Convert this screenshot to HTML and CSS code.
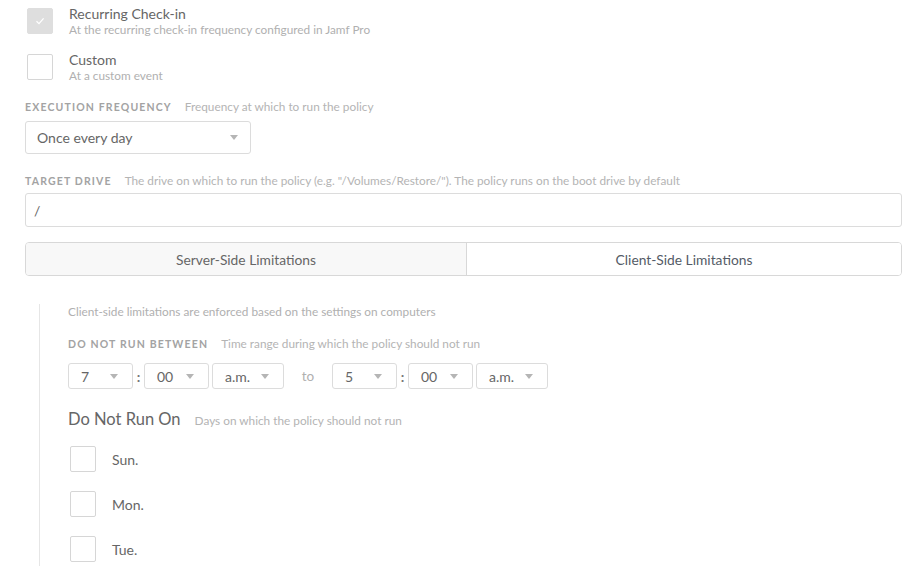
FILE: index.html
```html
<!DOCTYPE html>
<html>
<head>
<meta charset="utf-8">
<link rel="stylesheet" href="styles.css">
</head>
<body>
<div class="page">
  <div class="option">
    <span class="box checked"><svg width="12" height="12" viewBox="0 0 12 12"><path d="M2.5 6.2 L5 8.6 L9.6 3.4" fill="none" stroke="#fff" stroke-width="1.3"/></svg></span>
    <div class="option-text">
      <div class="option-title">Recurring Check-in</div>
      <div class="option-sub">At the recurring check-in frequency configured in Jamf Pro</div>
    </div>
  </div>
  <div class="option option-2">
    <span class="box"></span>
    <div class="option-text">
      <div class="option-title">Custom</div>
      <div class="option-sub">At a custom event</div>
    </div>
  </div>

  <div class="field-label label-freq"><span class="caps">EXECUTION FREQUENCY</span><span class="help">Frequency at which to run the policy</span></div>
  <div class="select select-freq"><span>Once every day</span><span class="caret"></span></div>

  <div class="field-label label-drive"><span class="caps">TARGET DRIVE</span><span class="help">The drive on which to run the policy (e.g. "/Volumes/Restore/"). The policy runs on the boot drive by default</span></div>
  <div class="input">/</div>

  <div class="tabs">
    <div class="tab tab-off">Server-Side Limitations</div>
    <div class="tab tab-on">Client-Side Limitations</div>
  </div>

  <div class="panel">
    <div class="panel-intro">Client-side limitations are enforced based on the settings on computers</div>
    <div class="field-label label-between"><span class="caps">DO NOT RUN BETWEEN</span><span class="help">Time range during which the policy should not run</span></div>
    <div class="time-row">
      <div class="select sm w64"><span>7</span><span class="caret"></span></div>
      <span class="colon">:</span>
      <div class="select sm w64"><span>00</span><span class="caret"></span></div>
      <div class="select sm w72 ml3"><span>a.m.</span><span class="caret"></span></div>
      <span class="to">to</span>
      <div class="select sm w64"><span>5</span><span class="caret"></span></div>
      <span class="colon">:</span>
      <div class="select sm w64"><span>00</span><span class="caret"></span></div>
      <div class="select sm w72 ml3"><span>a.m.</span><span class="caret"></span></div>
    </div>
    <div class="days-head"><span class="days-title">Do Not Run On</span><span class="help">Days on which the policy should not run</span></div>
    <div class="day"><span class="box"></span><span class="day-label">Sun.</span></div>
    <div class="day"><span class="box"></span><span class="day-label">Mon.</span></div>
    <div class="day"><span class="box"></span><span class="day-label">Tue.</span></div>
  </div>
</div>
</body>
</html>
```
FILE: styles.css
```css
html, body { margin: 0; padding: 0; background: #fff; }
body { font-family: "Lato", "Open Sans", sans-serif; color: #555; overflow: hidden; height: 566px; }
.page { padding: 8px 18px 0 25px; }

.option { display: flex; align-items: flex-start; margin-left: 2px; height: 26px; }
.option-2 { margin-top: 20px; }
.box { width: 24px; height: 24px; border: 1px solid #d6d6d6; border-radius: 2px; background: #fff; display: flex; align-items: center; justify-content: center; flex: none; }
.box.checked { background: #dedede; border-color: #dedede; }
.option-text { margin-left: 16px; margin-top: -2px; }
.option-title { font-size: 14px; color: #666; line-height: 16px; }
.option-sub { font-size: 11.8px; color: #b0b0b0; line-height: 15px; }

.field-label { display: flex; align-items: baseline; line-height: 14px; height: 14px; }
.caps { font-size: 10.5px; font-weight: 700; letter-spacing: 1.15px; color: #a3a3a3; }
.help { font-size: 11.8px; color: #b4b4b4; margin-left: 13px; }
.label-freq { margin-top: 20px; }
.label-drive { margin-top: 20px; }

.select { display: flex; align-items: center; justify-content: space-between; border: 1px solid #dcdcdc; border-radius: 3px; background: #fff; box-sizing: border-box; color: #666; }
.select-freq { width: 226px; height: 33px; margin-top: 7px; padding: 0 12px 0 11px; font-size: 14px; }
.caret { width: 0; height: 0; border-left: 4px solid transparent; border-right: 4px solid transparent; border-top: 5px solid #b5b5b5; }

.input { margin-top: 5px; height: 34px; box-sizing: border-box; border: 1px solid #dcdcdc; border-radius: 3px; padding: 0 8px; display: flex; align-items: center; font-size: 14px; color: #666; }

.tabs { display: flex; margin-top: 15px; height: 34px; border: 1px solid #d8d8d8; border-radius: 4px; box-sizing: border-box; overflow: hidden; }
.tab { display: flex; align-items: center; justify-content: center; font-size: 13.8px; }
.tab-off { flex: 0 0 440px; background: #f8f8f8; color: #666; border-right: 1px solid #d8d8d8; }
.tab-on { flex: 1; background: #fff; color: #545b66; }

.panel { margin-left: 14px; margin-top: 28px; border-left: 1px solid #e6e6e6; padding-left: 28px; padding-top: 1px; padding-bottom: 40px; }
.panel-intro { font-size: 11.8px; color: #b0b0b0; line-height: 14px; }
.label-between { margin-top: 18px; }

.time-row { display: flex; align-items: center; margin-top: 12px; }
.select.sm { height: 26px; padding: 0 14px 0 12px; font-size: 14px; }
.w64 { width: 65px; }
.w72 { width: 72px; }
.ml3 { margin-left: 3px; }
.colon { width: 11px; text-align: center; font-size: 14px; font-weight: 700; color: #777; }
.to { width: 48px; text-align: center; font-size: 13.5px; color: #b0b0b0; }

.days-head { display: flex; align-items: baseline; margin-top: 20px; line-height: 20px; height: 20px; }
.days-title { font-size: 16.5px; color: #666; }
.days-head .help { margin-left: 14px; }

.day { display: flex; align-items: center; margin-left: 2px; margin-top: 19px; height: 26px; }
.days-head + .day { margin-top: 17px; }
.day-label { margin-left: 16px; font-size: 14px; color: #666; }
```
